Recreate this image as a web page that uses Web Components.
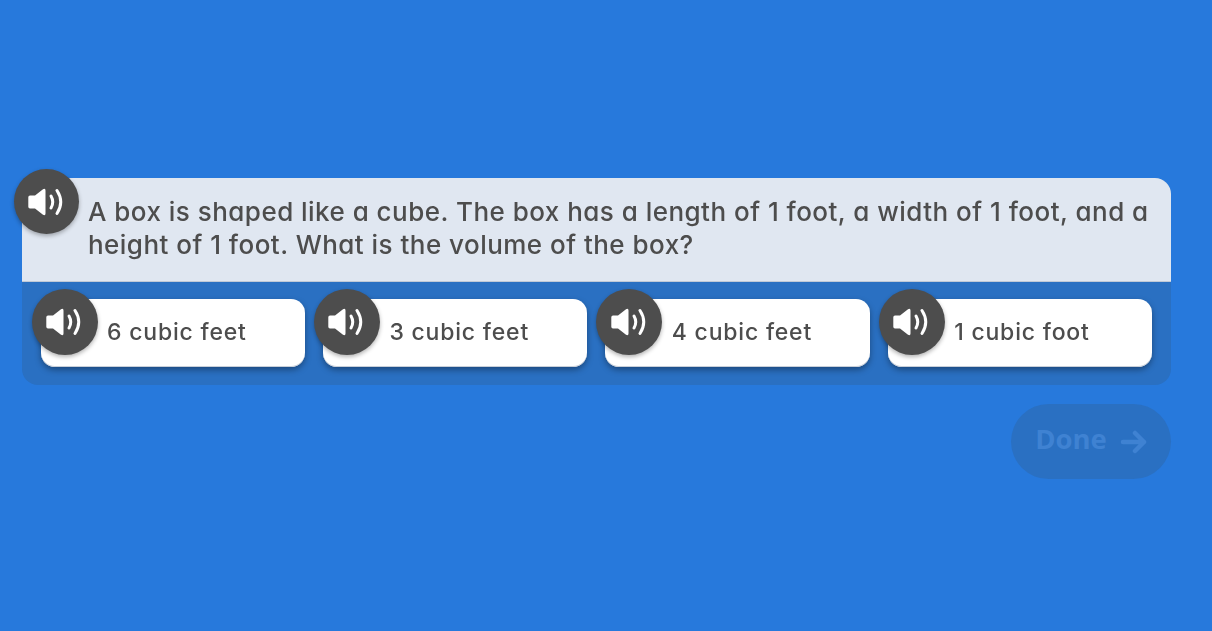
<!DOCTYPE html>
<html>
<head>
<meta charset="utf-8">
<title>Question</title>
<style>
  html, body { margin: 0; height: 100%; background: #2779dc; }
  body { font-family: "Inter", "Noto Sans", sans-serif; overflow: hidden; }
</style>
</head>
<body>
<quiz-screen>
  <span slot="question">A box is shaped like a cube. The box has a length of 1 foot, a width of 1 foot, and a height of 1 foot. What is the volume of the box?</span>
  <quiz-choice>6 cubic feet</quiz-choice>
  <quiz-choice>3 cubic feet</quiz-choice>
  <quiz-choice>4 cubic feet</quiz-choice>
  <quiz-choice>1 cubic foot</quiz-choice>
</quiz-screen>

<script>
class SpeakerButton extends HTMLElement {
  constructor() {
    super();
    this.attachShadow({ mode: 'open' });
    this.shadowRoot.innerHTML = `
      <style>
        :host {
          display: flex;
          align-items: center;
          justify-content: center;
          width: 65px;
          height: 65px;
          border-radius: 50%;
          background: #4d4d4d;
          box-shadow: 0 2px 4px rgba(0, 0, 0, 0.3);
        }
        svg { display: block; width: 36px; height: 28px; margin-left: -1px; }
      </style>
      <svg viewBox="0 0 36 28" aria-hidden="true">
        <path fill="#fff" d="M2 7.5 H7 L15 1.2 Q17.5 -0.2 17.5 2.5 V25.5 Q17.5 28.2 15 26.8 L7 20.5 H2 Q0.3 20.5 0.3 18.8 V9.2 Q0.3 7.5 2 7.5 Z"/>
        <path fill="none" stroke="#fff" stroke-width="3" stroke-linecap="round" d="M23 8 Q26.5 14 23 20"/>
        <path fill="none" stroke="#fff" stroke-width="3" stroke-linecap="round" d="M29 2.5 Q36.5 14 29 25.5"/>
      </svg>
    `;
  }
}
customElements.define('speaker-button', SpeakerButton);

class QuizChoice extends HTMLElement {
  constructor() {
    super();
    this.attachShadow({ mode: 'open' });
    this.shadowRoot.innerHTML = `
      <style>
        :host {
          display: flex;
          align-items: center;
          position: relative;
          flex: 1 1 0;
          height: 68px;
          padding: 0 0 0 66.5px;
          box-sizing: border-box;
          background: #fff;
          border-radius: 14px;
          color: #4d4d4d;
          font-size: 23px;
          font-weight: 450;
          font-feature-settings: "cv11";
          letter-spacing: 0.8px;
          box-shadow: inset 0 -1px 0 #c8cfd9, 0 3px 6px rgba(0, 0, 0, 0.35);
        }
        speaker-button { position: absolute; left: -9px; top: -10px; width: 66px; height: 66px; }
        .label { position: relative; top: -1px; will-change: opacity; }
      </style>
      <speaker-button></speaker-button>
      <span class="label"><slot></slot></span>
    `;
  }
}
customElements.define('quiz-choice', QuizChoice);

class QuizScreen extends HTMLElement {
  constructor() {
    super();
    this.attachShadow({ mode: 'open' });
    this.shadowRoot.innerHTML = `
      <style>
        :host { display: block; padding: 178px 41px 0 22px; }
        .panel { border-radius: 16px; background: #2a70c2; }
        .question {
          position: relative;
          box-sizing: border-box;
          height: 104px;
          padding: 17px 10px 0 66px;
          background: #e0e7f1;
          border-radius: 16px 16px 0 0;
          border-bottom: 1px solid #c0c9d6;
          color: #4d4d4d;
          font-size: 26px;
          font-weight: 450;
          font-feature-settings: "cv11";
          letter-spacing: 0.47px;
          line-height: 33px;
        }
        .question speaker-button { position: absolute; left: -8px; top: -9px; }
        .text { display: block; will-change: opacity; }
        .choices { display: flex; gap: 18px; padding: 17px 19px 18px 18.5px; }
        .footer { display: flex; justify-content: flex-end; padding-top: 19px; }
        .done {
          display: flex;
          align-items: center;
          justify-content: center;
          gap: 13px;
          width: 160px;
          height: 75px;
          padding: 0 0 7px 1px;
          box-sizing: border-box;
          border-radius: 38px;
          background: #2a70c2;
          color: #3f82d2;
          font-family: "Open Sans", sans-serif;
          font-size: 27.5px;
          font-weight: 700;
        }
        .done svg { width: 28px; height: 24px; display: block; position: relative; top: 3.5px; }
      </style>
      <div class="panel">
        <div class="question">
          <speaker-button></speaker-button>
          <div class="text"><slot name="question"></slot></div>
        </div>
        <div class="choices"><slot></slot></div>
      </div>
      <div class="footer">
        <div class="done">
          <span>Done</span>
          <svg viewBox="0 0 28 24" aria-hidden="true">
            <path fill="none" stroke="currentColor" stroke-width="4.5" stroke-linecap="round" stroke-linejoin="round" d="M3 12 H24 M15 3 L24 12 L15 21"/>
          </svg>
        </div>
      </div>
    `;
  }
}
customElements.define('quiz-screen', QuizScreen);
</script>
</body>
</html>
